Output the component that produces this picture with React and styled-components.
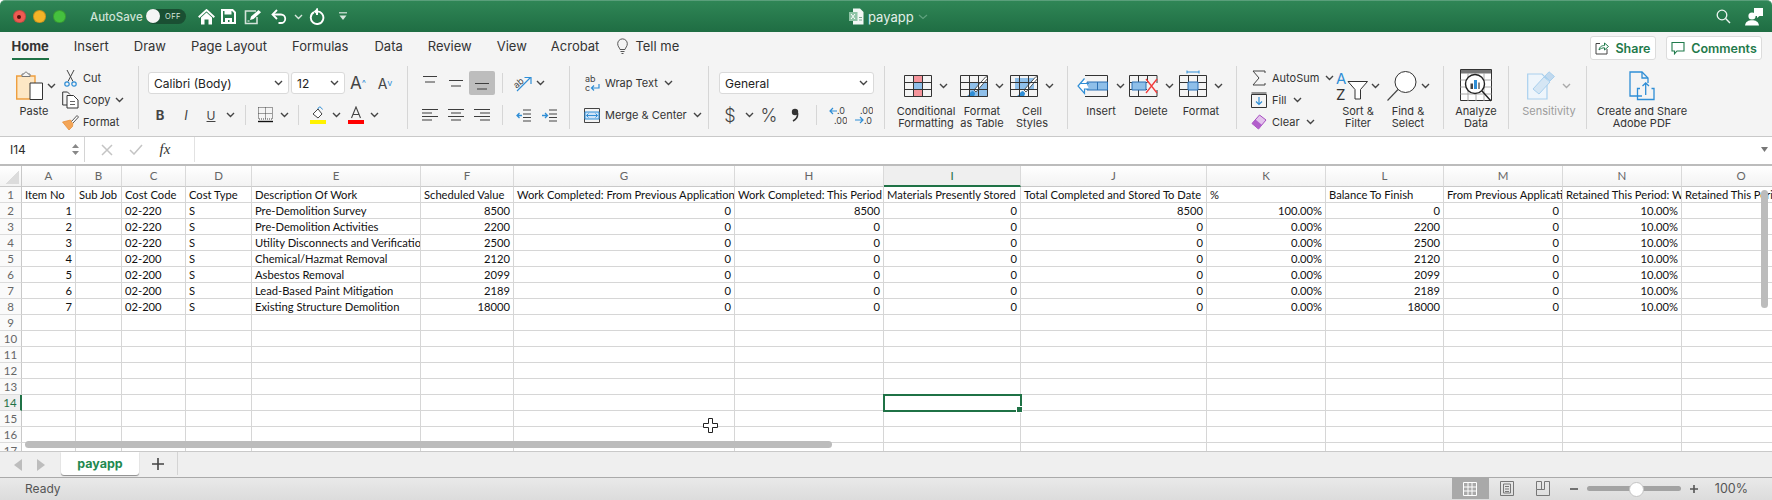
import styled, { createGlobalStyle } from 'styled-components'

const UI = `Inter, "Liberation Sans", sans-serif`
const CELL = `Lato, "Open Sans", sans-serif`
const DARK = '#3d3d3d'
const BLUE = '#2f8ed6'
const PALE = '#8fbfe9'

const GlobalStyle = createGlobalStyle`
  html, body { margin: 0; padding: 0; background: #fff; }
  #root { width: 1772px; height: 500px; overflow: hidden; }
  * { box-sizing: border-box; }
`

const Window = styled.div`
  width: 1772px;
  height: 500px;
  display: flex;
  flex-direction: column;
  overflow: hidden;
  font-family: ${UI};
  color: #2c2c2c;
`

/* title bar */
const TitleBar = styled.div`
  height: 32px;
  flex: none;
  display: flex;
  align-items: center;
  color: #fff;
  background: linear-gradient(#2f8656, #1f6d43);
  border-top: 1px solid #5a9f7b;
  border-radius: 5px 5px 0 0;
`
const Dots = styled.div`
  display: flex;
  gap: 7.5px;
  margin-left: 13px;
  width: 77px;
`
const Dot = styled.span`
  width: 12.5px;
  height: 12.5px;
  border-radius: 50%;
  background: ${(p) => p.$c};
  border: 1px solid rgba(0, 0, 0, 0.18);
  display: flex;
  align-items: center;
  justify-content: center;
  &::after {
    content: '';
    width: 4px;
    height: 4px;
    border-radius: 50%;
    background: ${(p) => (p.$mark ? '#5b0f0c' : 'transparent')};
  }
`
const AutoSave = styled.span`
  font-size: 11.5px;
  font-weight: 500;
  width: 56px;
  color: #cfe3d7;
`
const Toggle = styled.span`
  width: 40px;
  height: 15px;
  border-radius: 8px;
  background: #1a4f33;
  display: flex;
  align-items: center;
  justify-content: flex-end;
  padding-right: 5px;
  font-size: 7.5px;
  letter-spacing: 0.5px;
  color: #d6e6dc;
  margin-right: 11px;
  position: relative;
  &::before {
    content: '';
    position: absolute;
    left: 0;
    top: 0;
    width: 14px;
    height: 14px;
    border-radius: 50%;
    background: #f5f5f5;
  }
`
const TitleTool = styled.span`
  width: ${(p) => p.$w}px;
  flex: none;
  display: flex;
  justify-content: center;
  align-items: center;
`
const DocName = styled.div`
  position: absolute;
  left: 849px;
  top: 8px;
  display: flex;
  align-items: center;
  gap: 4px;
  font-size: 13px;
  color: #e3efe8;
`
const TitleRight = styled.div`
  margin-left: auto;
  margin-right: 9px;
  display: flex;
  align-items: center;
  gap: 14px;
`

/* tab row */
const Ribbon = styled.div`
  flex: none;
  height: 105px;
  background: #f4f4f4;
  border-bottom: 1px solid #c9c9c9;
`
const TabRow = styled.div`
  height: 34px;
  display: flex;
  align-items: flex-start;
  padding-left: 11.5px;
`
const Tab = styled.div`
  margin-right: ${(p) => p.$gap}px;
  height: 28px;
  line-height: 29px;
  font-size: 13px;
  font-weight: ${(p) => (p.$active ? 700 : 400)};
  color: #333;
  border-bottom: ${(p) => (p.$active ? '2.5px solid #1f7246' : 'none')};
  white-space: nowrap;
`
const TellMe = styled(Tab)`
  display: flex;
  align-items: center;
  gap: 7px;
  margin-left: 18px;
`
const ShareArea = styled.div`
  margin-left: auto;
  margin-right: 10px;
  margin-top: 4px;
  display: flex;
  gap: 10px;
`
const PillButton = styled.div`
  width: ${(p) => p.$w}px;
  height: 24px;
  background: #fff;
  border: 1px solid #dcdcdc;
  border-radius: 3px;
  display: flex;
  align-items: center;
  justify-content: center;
  gap: 6px;
  font-size: 12.5px;
  font-weight: 600;
  color: #1f7a4b;
`

/* ribbon body */
const RibbonBody = styled.div`
  height: 70px;
  display: flex;
  align-items: flex-start;
`
const Group = styled.div`
  width: ${(p) => p.$w}px;
  height: 63px;
  flex: none;
  display: flex;
  padding-left: ${(p) => p.$pad || 0}px;
  border-right: ${(p) => (p.$last ? 'none' : '1px solid #d6d6d6')};
`
const TwoRows = styled.div`
  display: flex;
  flex-direction: column;
  gap: 10px;
  padding-top: 6px;
`
const ThreeRows = styled.div`
  display: flex;
  flex-direction: column;
  width: ${(p) => p.$w}px;
  flex: none;
  padding-top: 1px;
`
const ToolRow = styled.div`
  height: 22px;
  display: flex;
  align-items: center;
`
const Tool = styled.span`
  width: ${(p) => p.$w}px;
  height: ${(p) => (p.$active ? 24 : 22)}px;
  flex: none;
  display: flex;
  align-items: center;
  justify-content: center;
  background: ${(p) => (p.$active ? '#bdbdbd' : 'transparent')};
  border-radius: 2px;
  font-size: ${(p) => p.$size || 13}px;
  font-weight: ${(p) => p.$weight || 400};
  font-style: ${(p) => (p.$italic ? 'italic' : 'normal')};
  color: #444;
`
const MiniSep = styled.span`
  width: 1px;
  height: 20px;
  flex: none;
  background: #d6d6d6;
  margin: 0 ${(p) => p.$m || 7}px;
`
const SmallLabel = styled.span`
  font-size: 11px;
  color: #333;
  margin-left: ${(p) => p.$left || 5}px;
  margin-right: ${(p) => p.$right || 5}px;
  white-space: nowrap;
`
const Caret = styled.sup`
  font-size: 9px;
  color: ${BLUE};
  line-height: 0;
`
const SelectBox = styled.div`
  width: ${(p) => p.$w}px;
  height: 22px;
  flex: none;
  background: #fff;
  border: 1px solid #dadada;
  border-radius: 3px;
  margin-right: ${(p) => p.$mr || 0}px;
  padding: 0 5px;
  display: flex;
  align-items: center;
  justify-content: space-between;
  font-size: 12px;
  color: #222;
`
const BigItem = styled.div`
  width: ${(p) => p.$w}px;
  flex: none;
  display: flex;
  flex-direction: column;
  align-items: center;
`
const BigIcon = styled.div`
  height: 39px;
  display: flex;
  align-items: center;
  gap: ${(p) => p.$gap ?? 7}px;
  padding-left: ${(p) => p.$shift || 0}px;
`
const BigLabel = styled.div`
  font-size: 11px;
  line-height: 12px;
  text-align: center;
  white-space: pre-line;
  color: ${(p) => (p.$muted ? '#9c9c9c' : '#333')};
`

/* formula bar */
const FormulaBar = styled.div`
  flex: none;
  height: 29px;
  display: flex;
  align-items: center;
  border-bottom: 2px solid #bcbcbc;
  background: #fff;
  padding-bottom: 2px;
`
const NameBox = styled.div`
  width: 85px;
  height: 100%;
  flex: none;
  display: flex;
  align-items: center;
  justify-content: space-between;
  padding: 0 5px 0 10px;
  font-size: 12px;
  border-right: 1px solid #d4d4d4;
`
const Stepper = styled.div`
  display: flex;
  flex-direction: column;
  gap: 3px;
`
const FormulaTool = styled.span`
  width: ${(p) => p.$w}px;
  flex: none;
  display: flex;
  justify-content: center;
`
const Fx = styled.span`
  font-family: "Liberation Serif", serif;
  font-style: italic;
  font-size: 15px;
  color: #333;
`
const FormulaRest = styled.div`
  flex: 1;
  height: 100%;
  margin-left: 7px;
  border-left: 1px solid #e2e2e2;
  display: flex;
  align-items: center;
  justify-content: flex-end;
  padding-right: 4px;
`

/* sheet */
const Sheet = styled.div`
  flex: none;
  height: 285px;
  position: relative;
  overflow: hidden;
  background: #fff;
  font-family: ${CELL};
`
const Row = styled.div`
  display: flex;
  width: 1801px;
  height: 16px;
`
const HeadRow = styled(Row)`
  height: 21px;
`
const Corner = styled.div`
  width: 22px;
  flex: none;
  background: linear-gradient(#fff, #f3f3f3);
  border-right: 1px solid #c9c9c9;
  border-bottom: 1px solid #c9c9c9;
  display: flex;
  justify-content: flex-end;
  align-items: flex-end;
  padding: 0 2px 2px 0;
  &::after {
    content: '';
    width: 13px;
    height: 13px;
    background: linear-gradient(135deg, transparent 50%, #dcdcdc 50%);
  }
`
const ColHead = styled.div`
  width: ${(p) => p.$w}px;
  flex: none;
  text-align: center;
  font-size: 11.5px;
  line-height: 20px;
  color: ${(p) => (p.$active ? '#1f7246' : '#666')};
  background: ${(p) => (p.$active ? '#efefef' : 'linear-gradient(#fff, #f3f3f3)')};
  border-right: 1px solid #dadada;
  border-bottom: ${(p) => (p.$active ? '2px solid #1f7246' : '1px solid #c9c9c9')};
`
const RowHead = styled.div`
  width: 22px;
  flex: none;
  text-align: center;
  font-size: 11.5px;
  line-height: 15px;
  color: ${(p) => (p.$active ? '#1f7246' : '#666')};
  background: ${(p) => (p.$active ? '#efefef' : '#fafafa')};
  border-right: ${(p) => (p.$active ? '2px solid #1f7246' : '1px solid #c9c9c9')};
  border-bottom: 1px solid #dcdcdc;
`
const Cell = styled.div`
  width: ${(p) => p.$w}px;
  flex: none;
  position: relative;
  overflow: ${(p) => (p.$selected ? 'visible' : 'hidden')};
  white-space: nowrap;
  padding: 0 3px;
  font-size: 11.2px;
  line-height: 16px;
  text-align: ${(p) => (p.$right ? 'right' : 'left')};
  color: #111;
  border-right: 1px solid #d6d6d6;
  border-bottom: 1px solid #d6d6d6;
  ${(p) =>
    p.$selected &&
    `
    z-index: 2;
    outline: 2px solid #1f7246;
    outline-offset: -1px;
    &::after {
      content: '';
      position: absolute;
      right: -3px;
      bottom: -3px;
      width: 5px;
      height: 5px;
      background: #1f7246;
      border: 1px solid #fff;
    }
  `}
`
const ScrollThumb = styled.div`
  position: absolute;
  background: #bcbcbc;
  border-radius: 4px;
  left: ${(p) => p.$x}px;
  top: ${(p) => p.$y}px;
  width: ${(p) => p.$w}px;
  height: ${(p) => p.$h}px;
  z-index: 3;
`
const CursorMark = styled.svg`
  position: absolute;
  left: 703px;
  top: 252px;
  z-index: 4;
`

/* sheet tabs and status bar */
const TabStrip = styled.div`
  flex: none;
  height: 26px;
  display: flex;
  background: #efefef;
  border-top: 1px solid #c9c9c9;
`
const NavArrows = styled.div`
  width: 61px;
  flex: none;
  display: flex;
  align-items: center;
  gap: 15px;
  padding-left: 14px;
`
const SheetTab = styled.div`
  width: 78px;
  height: 23px;
  background: #fff;
  border-radius: 0 0 3px 3px;
  box-shadow: 0 1px 1px #8a8a8a;
  text-align: center;
  line-height: 23px;
  font-size: 12.5px;
  font-weight: 700;
  color: #1f8a50;
`
const AddSheet = styled.div`
  width: 39px;
  border-right: 1px solid #d4d4d4;
  height: 23px;
  display: flex;
  align-items: center;
  justify-content: center;
`
const StatusBar = styled.div`
  flex: 1;
  display: flex;
  align-items: center;
  padding-left: 25px;
  padding-bottom: 1px;
  border-top: 1px solid #aaa;
  background: linear-gradient(#e9e9e9, #dcdcdc);
  font-size: 12px;
  color: #555;
`
const ViewButtons = styled.div`
  margin-left: auto;
  height: 100%;
  display: flex;
  align-items: center;
`
const ViewButton = styled.div`
  width: ${(p) => p.$w}px;
  height: 100%;
  display: flex;
  align-items: center;
  justify-content: center;
  background: ${(p) => (p.$active ? '#a9a9a9' : 'transparent')};
`
const Zoom = styled.div`
  display: flex;
  align-items: center;
  margin-left: 9px;
  margin-right: 24px;
`
const Slider = styled.div`
  width: 94px;
  height: 5px;
  border-radius: 3px;
  background: #a3a3a3;
  margin: 0 9px;
  position: relative;
  &::after {
    content: '';
    position: absolute;
    left: 42px;
    top: -4px;
    width: 13px;
    height: 13px;
    border-radius: 50%;
    background: #fff;
    border: 1px solid #c4c4c4;
  }
`
const ZoomValue = styled.span`
  margin-left: 17px;
  font-size: 12.5px;
  color: #555;
`

/* small drawings */
const Icon = ({ w, h, children, ...rest }) => (
  <svg width={w} height={h} viewBox={`0 0 ${w} ${h}`} fill="none" style={{ flex: 'none', display: 'block' }} {...rest}>
    {children}
  </svg>
)
const Chevron = ({ color = '#444' }) => (
  <Icon w={9} h={6}>
    <path d="M1 1l3.5 3.5L8 1" stroke={color} strokeWidth="1.4" />
  </Icon>
)
const Lines = ({ rows, y = 2 }) => (
  <Icon w={16} h={16}>
    {rows.map(([x1, x2], i) => (
      <path key={i} d={`M${x1} ${y + i * 5.5 + 0.5}H${x2}`} stroke={DARK} strokeWidth="1" />
    ))}
  </Icon>
)
const AlignGlyph = ({ pad }) => (
  <Icon w={16} h={14}>
    <path d={`M0 1.5H16M${pad[0]} 5H${pad[1]}M0 8.5H16M${pad[0]} 12H${pad[1]}`} stroke={DARK} />
  </Icon>
)
const TableGrid = ({ w = 28, h = 22, children }) => (
  <Icon w={w} h={h}>
    {children}
    <path
      d={`M.5.5H${w - 0.5}V${h - 0.5}H.5ZM.5 7.5H${w - 0.5}M.5 14.5H${w - 0.5}M9.5.5V${h - 0.5}M18.5.5V${h - 0.5}`}
      stroke="#333"
    />
  </Icon>
)
const Brush = () => (
  <g>
    <path d="M12 22c-3 0-5-1-5-1 3-1 3-5 6-5l2 2c0 2-1 4-3 4Z" fill={BLUE} />
    <path d="M14 15L26 1.5l2 1.5L16 17Z" fill="#fff" stroke="#444" strokeWidth=".9" />
  </g>
)

const CELL_WIDTHS = [54, 46, 64, 66, 169, 93, 221, 149, 137, 186, 119, 118, 119, 119, 119]
const COLUMNS = 'ABCDEFGHIJKLMNO'.split('')
const HEADERS = [
  'Item No', 'Sub Job', 'Cost Code', 'Cost Type', 'Description Of Work', 'Scheduled Value',
  'Work Completed: From Previous Application', 'Work Completed: This Period', 'Materials Presently Stored',
  'Total Completed and Stored To Date', '%', 'Balance To Finish', 'From Previous Application',
  'Retained This Period: Work', 'Retained This Period',
]
const ITEMS = [
  ['02-220', 'Pre-Demolition Survey', 8500, 8500, 8500, '100.00%', 0],
  ['02-220', 'Pre-Demolition Activities', 2200, 0, 0, '0.00%', 2200],
  ['02-220', 'Utility Disconnects and Verification', 2500, 0, 0, '0.00%', 2500],
  ['02-200', 'Chemical/Hazmat Removal', 2120, 0, 0, '0.00%', 2120],
  ['02-200', 'Asbestos Removal', 2099, 0, 0, '0.00%', 2099],
  ['02-200', 'Lead-Based Paint Mitigation', 2189, 0, 0, '0.00%', 2189],
  ['02-200', 'Existing Structure Demolition', 18000, 0, 0, '0.00%', 18000],
]

const rowCells = (n) => {
  const item = ITEMS[n - 2]
  if (n === 1) return HEADERS.map((text) => ({ text }))
  if (!item) return HEADERS.map(() => ({ text: '' }))
  const [code, desc, value, thisPeriod, total, pct, balance] = item
  return [
    { text: n - 1, right: true }, { text: '' }, { text: code }, { text: 'S' }, { text: desc },
    { text: value, right: true }, { text: 0, right: true }, { text: thisPeriod, right: true },
    { text: 0, right: true }, { text: total, right: true }, { text: pct, right: true },
    { text: balance, right: true }, { text: 0, right: true }, { text: '10.00%', right: true }, { text: '' },
  ]
}

const TABS = [
  ['Insert', 25], ['Draw', 25], ['Page Layout', 25], ['Formulas', 26], ['Data', 25], ['Review', 25], ['View', 24], ['Acrobat', 0],
]

export default function App() {
  return (
    <Window>
      <GlobalStyle />
      <TitleBar>
        <Dots>
          <Dot $c="#ee5b52" $mark />
          <Dot $c="#f5b427" />
          <Dot $c="#45c13e" />
        </Dots>
        <AutoSave>AutoSave</AutoSave>
        <Toggle>OFF</Toggle>
        <TitleTool $w={18}>
          <Icon w={17} h={16}>
            <path d="M.7 8.2L8.5 1l7.8 7.2" stroke="#fff" strokeWidth="1.9" />
            <path d="M3 8.5L8.5 3.6 14 8.5V15.5H10.5V10.5H6.5V15.5H3Z" fill="#fff" />
          </Icon>
        </TitleTool>
        <TitleTool $w={27}>
          <Icon w={15} h={15}>
            <path d="M1 1H11.5L14 3.5V14H1Z" stroke="#fff" strokeWidth="2" />
            <path d="M3.5 1.5H10.5V5.5H3.5ZM4 9H11V14H8.5V11H7V14H4Z" fill="#fff" />
          </Icon>
        </TitleTool>
        <TitleTool $w={22}>
          <Icon w={18} h={16}>
            <path d="M12 2H1.5V14.5H13V8" stroke="#d3e3d9" strokeWidth="1.6" />
            <path d="M6 11l1-3.5L14.5 1 17 3.2 9.5 10Z" fill="#fff" />
            <path d="M3.5 12h2" stroke="#fff" />
          </Icon>
        </TitleTool>
        <TitleTool $w={30}>
          <Icon w={16} h={15}>
            <path d="M6 1L1.5 5.5 6 10" stroke="#fff" strokeWidth="1.8" />
            <path d="M2 5.5H10A4.2 4.2 0 0 1 10 14H7.5" stroke="#fff" strokeWidth="1.8" />
          </Icon>
        </TitleTool>
        <TitleTool $w={8}>
          <Chevron color="#d8e7de" />
        </TitleTool>
        <TitleTool $w={30}>
          <Icon w={16} h={17}>
            <path d="M5 4.2A6.3 6.3 0 1 0 8 3.4" stroke="#fff" strokeWidth="1.9" />
            <path d="M8 .5V7" stroke="#fff" strokeWidth="1.9" />
            <path d="M8.8 0V7L4.6 3.4Z" fill="#fff" />
          </Icon>
        </TitleTool>
        <TitleTool $w={22}>
          <Icon w={8} h={9}>
            <path d="M0 .8H8" stroke="#d8e7de" strokeWidth="1.2" />
            <path d="M.5 3.5H7.5L4 8Z" fill="#d8e7de" />
          </Icon>
        </TitleTool>
        <DocName>
          <Icon w={15} h={17}>
            <path d="M4 .5H11L14.5 4V16.5H4Z" fill="#f2f7f4" />
            <path d="M0 4H8.5V13H0Z" fill="#8fc4a6" />
            <path d="M2 6l4 5M6 6l-4 5" stroke="#fff" />
            <path d="M10 9.5h3M10 12h3" stroke="#7aa98e" />
          </Icon>
          payapp
          <Icon w={10} h={6}>
            <path d="M1 1l4 3.5L9 1" stroke="#5fa27e" strokeWidth="1.2" />
          </Icon>
        </DocName>
        <TitleRight>
          <Icon w={15} h={15}>
            <circle cx="6" cy="6" r="4.8" stroke="#eef5f1" strokeWidth="1.3" />
            <path d="M9.6 9.6L14 14" stroke="#eef5f1" strokeWidth="1.4" />
          </Icon>
          <Icon w={18} h={19}>
            <path d="M9 1H18V9H14.5L12 11V9H9Z" fill="#fff" />
            <circle cx="7" cy="9" r="3.6" fill="#fff" />
            <path d="M0 18.5C.5 14.5 3.5 13.2 7 13.2S13.5 14.5 14 18.5Z" fill="#fff" />
          </Icon>
        </TitleRight>
      </TitleBar>

      <Ribbon>
        <TabRow>
          <Tab $active $gap={25}>Home</Tab>
          {TABS.map(([name, gap]) => (
            <Tab key={name} $gap={gap}>{name}</Tab>
          ))}
          <TellMe $gap={0}>
            <Icon w={11} h={17}>
              <path d="M3 11.5C2.5 9.5.7 8.5.7 5.7A4.8 4.8 0 0 1 10.3 5.7C10.3 8.5 8.5 9.5 8 11.5ZM3.5 13.5H7.5M4.500 15.5H6.5" stroke="#555" />
            </Icon>
            Tell me
          </TellMe>
          <ShareArea>
            <PillButton $w={66}>
              <Icon w={14} h={14}>
                <path d="M5 2.5H1V13H12V8" stroke="#444" />
                <path d="M4 9C4.5 5.5 7 4.5 9.5 4.5V2L13.5 5.5 9.5 9V6.8C7.5 6.8 5.5 7.5 4 9Z" stroke="#1f7a4b" />
              </Icon>
              Share
            </PillButton>
            <PillButton $w={96}>
              <Icon w={14} h={14}>
                <path d="M1 1.5H13V10H6L3.5 12.8V10H1Z" stroke="#1f7a4b" strokeWidth="1.1" />
              </Icon>
              Comments
            </PillButton>
          </ShareArea>
        </TabRow>

        <RibbonBody>
          <Group $w={139} $pad={10}>
            <BigItem $w={48}>
              <BigIcon $shift={4} $gap={4}>
                <Icon w={27} h={29}>
                  <path d="M.7 5H19V28H.7Z" fill="#fde7c4" stroke="#ee9f3f" strokeWidth="1.4" />
                  <path d="M6 5.5V3H8C8.5 .5 11.5 .5 12 3H14V5.5Z" fill="#f4f4f4" stroke="#777" />
                  <path d="M14 12H26.5V28.5H14Z" fill="#fff" stroke="#333" />
                </Icon>
                <Chevron />
              </BigIcon>
              <BigLabel>Paste</BigLabel>
            </BigItem>
            <ThreeRows $w={78}>
              <ToolRow>
                <Tool $w={24}>
                  <Icon w={13} h={18}>
                    <path d="M3 1L9 12.5M10 1L4 12.5" stroke="#444" />
                    <circle cx="3" cy="15" r="2.2" stroke={BLUE} strokeWidth="1.2" />
                    <circle cx="10" cy="15" r="2.2" stroke={BLUE} strokeWidth="1.2" />
                  </Icon>
                </Tool>
                <SmallLabel $left={1}>Cut</SmallLabel>
              </ToolRow>
              <ToolRow>
                <Tool $w={24}>
                  <Icon w={17} h={18}>
                    <path d="M5 14H.7V1H5.5L8 3.5" stroke="#333" />
                    <path d="M5 4.5H11.5L16 9V17H5Z" fill="#fff" stroke="#333" />
                    <path d="M8 10.5H13M8 13.5H13" stroke="#666" />
                  </Icon>
                </Tool>
                <SmallLabel $left={1}>Copy</SmallLabel>
                <Chevron />
              </ToolRow>
              <ToolRow>
                <Tool $w={24}>
                  <Icon w={17} h={17}>
                    <path d="M.5 8L7 16 10.5 12.5 11 8.5 8.5 6Z" fill="#f3a557" stroke="#e68a2e" strokeWidth=".7" />
                    <path d="M9.5 7.5L15 1.5 16.5 3 11 9" fill="#fff" stroke="#555" />
                  </Icon>
                </Tool>
                <SmallLabel $left={1}>Format</SmallLabel>
              </ToolRow>
            </ThreeRows>
          </Group>

          <Group $w={269} $pad={9}>
            <TwoRows>
              <ToolRow>
                <SelectBox $w={141} $mr={2}>
                  Calibri (Body)
                  <Chevron />
                </SelectBox>
                <SelectBox $w={54}>
                  12
                  <Chevron />
                </SelectBox>
                <Tool $w={26} $size={17}>
                  A<Caret>^</Caret>
                </Tool>
                <Tool $w={28} $size={14}>
                  A<Caret>v</Caret>
                </Tool>
              </ToolRow>
              <ToolRow>
                <Tool $w={24} $weight={700} $size={13}>B</Tool>
                <Tool $w={28} $italic $size={13}>I</Tool>
                <Tool $w={22} $size={12}><u>U</u></Tool>
                <Tool $w={16}><Chevron /></Tool>
                <MiniSep $m={7} />
                <Tool $w={24}>
                  <Icon w={15} h={16}>
                    <path d="M.5.5H14.5V12H.5ZM7.5.5V12M.5 6.5H14.5" stroke="#444" strokeDasharray="1 1" />
                    <path d="M0 14.5H15" stroke="#111" strokeWidth="1.4" />
                  </Icon>
                </Tool>
                <Tool $w={14}><Chevron /></Tool>
                <MiniSep $m={7} />
                <Tool $w={24}>
                  <Icon w={16} h={18}>
                    <path d="M3 8L8 3 12 8 8 12Z" stroke="#444" fill="#fff" />
                    <path d="M8 3C8 1 10 .5 11 1.5L12.5 3.5" stroke={BLUE} />
                    <path d="M0 14H16V18H0Z" fill="#fff200" />
                  </Icon>
                </Tool>
                <Tool $w={12}><Chevron /></Tool>
                <Tool $w={28}>
                  <Icon w={16} h={18}>
                    <path d="M3.5 12L8 1 12.5 12M5 8.5H11" stroke="#444" strokeWidth="1.1" />
                    <path d="M0 14H16V18H0Z" fill="#f00" />
                  </Icon>
                </Tool>
                <Tool $w={8}><Chevron /></Tool>
              </ToolRow>
            </TwoRows>
          </Group>

          <Group $w={162} $pad={9}>
            <TwoRows>
              <ToolRow>
                <Tool $w={26}><Lines rows={[[1, 15], [3, 13]]} y={1} /></Tool>
                <Tool $w={26}><Lines rows={[[1, 15], [3, 13]]} y={5} /></Tool>
                <Tool $w={26} $active><Lines rows={[[1, 15], [3, 13]]} y={8} /></Tool>
                <MiniSep $m={7} />
                <Tool $w={26}>
                  <Icon w={20} h={17}>
                    <text x="1" y="11" transform="rotate(-40 6 9)" fontFamily="Inter" fontSize="9" fill="#444">ab</text>
                    <path d="M4 16L17 3M11.5 2.5H18V9" stroke={BLUE} strokeWidth="1.2" />
                  </Icon>
                </Tool>
                <Chevron />
              </ToolRow>
              <ToolRow>
                <Tool $w={26}><AlignGlyph pad={[0, 10]} /></Tool>
                <Tool $w={26}><AlignGlyph pad={[3, 13]} /></Tool>
                <Tool $w={26}><AlignGlyph pad={[6, 16]} /></Tool>
                <MiniSep $m={7} />
                <Tool $w={26}>
                  <Icon w={15} h={13}>
                    <path d="M7 1H15M7 5H15M7 8.5H15M7 12H15" stroke="#444" />
                    <path d="M6 6.5H1M3.5 4L1 6.5 3.5 9" stroke={BLUE} strokeWidth="1.3" />
                  </Icon>
                </Tool>
                <Tool $w={26}>
                  <Icon w={15} h={13}>
                    <path d="M7 1H15M7 5H15M7 8.5H15M7 12H15" stroke="#444" />
                    <path d="M0 6.5H5M3 4L5.5 6.5 3 9" stroke={BLUE} strokeWidth="1.3" />
                  </Icon>
                </Tool>
              </ToolRow>
            </TwoRows>
          </Group>

          <Group $w={139} $pad={14}>
            <TwoRows>
              <ToolRow>
                <Icon w={16} h={18}>
                  <text x="1" y="8" fontFamily="Inter" fontSize="9" fill="#444">ab</text>
                  <text x="1" y="17" fontFamily="Inter" fontSize="9" fill="#444">c</text>
                  <path d="M15 10V14H8M10 11.5L7.5 14 10 16.5" stroke={BLUE} strokeWidth="1.2" />
                </Icon>
                <SmallLabel $left={5} $right={6}>Wrap Text</SmallLabel>
                <Chevron />
              </ToolRow>
              <ToolRow>
                <Icon w={16} h={15}>
                  <path d="M.5.5H15.5V14.5H.5Z" stroke="#444" />
                  <path d="M1 4H15V11H1Z" fill="#cfe3f6" stroke={BLUE} />
                  <path d="M2.5 7.5H13.5M4.5 5.5L2.5 7.5 4.5 9.5M11.5 5.5L13.5 7.5 11.5 9.5" stroke={BLUE} />
                </Icon>
                <SmallLabel $left={5} $right={6}>Merge &amp; Center</SmallLabel>
                <Chevron />
              </ToolRow>
            </TwoRows>
          </Group>

          <Group $w={176} $pad={10}>
            <TwoRows>
              <SelectBox $w={155}>
                General
                <Chevron />
              </SelectBox>
              <ToolRow>
                <Tool $w={22} $size={18} $weight={300}>$</Tool>
                <Tool $w={16}><Chevron /></Tool>
                <Tool $w={24} $size={18} $weight={300}>%</Tool>
                <Tool $w={27}>
                  <Icon w={8} h={14}>
                    <circle cx="4" cy="4" r="3.2" fill="#333" />
                    <path d="M6.5 5C7 8.5 5 11.5 2 13" stroke="#333" strokeWidth="1.6" />
                  </Icon>
                </Tool>
                <MiniSep $m={8} />
                <Tool $w={26}>
                  <Icon w={18} h={19}>
                    <text x="8" y="8" fontFamily="Inter" fontSize="9" fill="#444">.0</text>
                    <text x="5" y="18" fontFamily="Inter" fontSize="9" fill="#444">.00</text>
                    <path d="M8 5H1M4 2L1 5 4 8" stroke={BLUE} strokeWidth="1.2" />
                  </Icon>
                </Tool>
                <Tool $w={26}>
                  <Icon w={18} h={19}>
                    <text x="5" y="8" fontFamily="Inter" fontSize="9" fill="#444">.00</text>
                    <text x="9" y="18" fontFamily="Inter" fontSize="9" fill="#444">.0</text>
                    <path d="M0 14H8M5 11L8 14 5 17" stroke={BLUE} strokeWidth="1.2" />
                  </Icon>
                </Tool>
              </ToolRow>
            </TwoRows>
          </Group>

          <Group $w={183} $pad={10}>
            <BigItem $w={62}>
              <BigIcon>
                <TableGrid>
                  <path d="M9 0H19V7H9ZM9 14H19V22H9Z" fill="#f5949b" />
                  <path d="M9 7H19V14H9Z" fill={PALE} />
                  <path d="M9.5.5H18.5V7.5H9.5V14.5H18.5V21.5H9.5" stroke="#e2323c" />
                </TableGrid>
                <Chevron />
              </BigIcon>
              <BigLabel>{'Conditional\nFormatting'}</BigLabel>
            </BigItem>
            <BigItem $w={50}>
              <BigIcon>
                <TableGrid>
                  <path d="M9 7H28V22H9Z" fill={PALE} />
                  <Brush />
                </TableGrid>
                <Chevron />
              </BigIcon>
              <BigLabel>{'Format\nas Table'}</BigLabel>
            </BigItem>
            <BigItem $w={50}>
              <BigIcon>
                <TableGrid>
                  <path d="M5 3H24V15H5Z" fill={PALE} />
                  <Brush />
                </TableGrid>
                <Chevron />
              </BigIcon>
              <BigLabel>{'Cell\nStyles'}</BigLabel>
            </BigItem>
          </Group>

          <Group $w={169} $pad={8}>
            <BigItem $w={50}>
              <BigIcon>
                <Icon w={32} h={22}>
                  <path d="M8 .5H30.5V21.5H8" stroke="#333" />
                  <path d="M10 7H30.5V15H10Z" fill={PALE} stroke="#2a6fb3" />
                  <path d="M20.5 7V15" stroke="#2a6fb3" />
                  <path d="M12 8.5H3M7.5 3.5L1 11 7.5 18.5V14H12" fill="#fff" stroke={BLUE} strokeWidth="1.2" />
                </Icon>
                <Chevron />
              </BigIcon>
              <BigLabel>Insert</BigLabel>
            </BigItem>
            <BigItem $w={50}>
              <BigIcon>
                <Icon w={29} h={22}>
                  <path d="M28 8V.5H.5V21.5H28V15M.5 7.5H18M.5 14.5H18M9.5.5V21.5M18.5.5V7.5" stroke="#333" />
                  <path d="M3 7H17V15H3Z" fill={PALE} stroke="#2a6fb3" />
                  <path d="M17 4L28 18M28 4L17 18" stroke="#f23a3a" strokeWidth="1.3" />
                </Icon>
                <Chevron />
              </BigIcon>
              <BigLabel>Delete</BigLabel>
            </BigItem>
            <BigItem $w={50}>
              <BigIcon>
                <Icon w={28} h={27} style={{ marginTop: -4 }}>
                  <path d="M8 2H20M8 .5V3.5M20 .5V3.5" stroke={BLUE} />
                  <path d="M.5 5.5H27.5V26.5H.5ZM.5 12.5H27.5M.5 19.5H27.5M9.5 5.5V26.5M18.5 5.5V26.5" stroke="#333" />
                  <path d="M9 12H19V20H9Z" fill={PALE} stroke="#2a6fb3" />
                </Icon>
                <Chevron />
              </BigIcon>
              <BigLabel>Format</BigLabel>
            </BigItem>
          </Group>

          <Group $w={207} $pad={12}>
            <ThreeRows $w={84}>
              <ToolRow>
                <Tool $w={20}>
                  <Icon w={14} h={16}>
                    <path d="M13 3V1H1L7 8 1 15H13V13" stroke="#444" />
                  </Icon>
                </Tool>
                <SmallLabel $left={3} $right={6}>AutoSum</SmallLabel>
                <Chevron />
              </ToolRow>
              <ToolRow>
                <Tool $w={20}>
                  <Icon w={16} h={16}>
                    <path d="M.5 2.5H15.5V15.5H.5ZM.5 1H15.5" stroke="#333" />
                    <path d="M8 5V12M5 9.5L8 12.5 11 9.5" stroke={BLUE} strokeWidth="1.2" />
                  </Icon>
                </Tool>
                <SmallLabel $left={3} $right={6}>Fill</SmallLabel>
                <Chevron />
              </ToolRow>
              <ToolRow>
                <Tool $w={20}>
                  <Icon w={16} h={16}>
                    <path d="M8.5 1L15 6 7.5 15 1 9.5Z" fill="#e3c2ec" stroke="#a64dc0" />
                    <path d="M4.5 5.5L11 11 7.5 15 1 9.5Z" fill="#b25ecb" />
                  </Icon>
                </Tool>
                <SmallLabel $left={3} $right={6}>Clear</SmallLabel>
                <Chevron />
              </ToolRow>
            </ThreeRows>
            <BigItem $w={50}>
              <BigIcon $gap={3}>
                <Icon w={32} h={30}>
                  <text x="0" y="13" fontFamily="Inter" fontSize="15" fill={BLUE}>A</text>
                  <text x="0" y="29" fontFamily="Inter" fontSize="15" fill="#333">Z</text>
                  <path d="M12 10.5H31.500L24.500 18.5V28H19V18.5Z" fill="#fff" stroke="#333" />
                </Icon>
                <Chevron />
              </BigIcon>
              <BigLabel>{'Sort &\nFilter'}</BigLabel>
            </BigItem>
            <BigItem $w={50}>
              <BigIcon $gap={4}>
                <Icon w={30} h={30}>
                  <circle cx="18.5" cy="11" r="10.5" fill="#fff" stroke="#333" />
                  <path d="M11 18.5L.5 29.5" stroke="#444" strokeWidth="1.1" />
                </Icon>
                <Chevron />
              </BigIcon>
              <BigLabel>{'Find &\nSelect'}</BigLabel>
            </BigItem>
          </Group>

          <Group $w={65} $pad={7}>
            <BigItem $w={50}>
              <BigIcon>
                <Icon w={32} h={33}>
                  <path d="M.5.5H31.5V31.5H.5Z" fill="#fff" stroke="#333" />
                  <path d="M1 1H31V4.5H1Z" fill="#777" />
                  <path d="M.5 11H31.5M.5 18H31.5M.5 25H31.5M8 4V32M16 4V32M24 4V32" stroke="#aaa" />
                  <circle cx="15" cy="15" r="9.5" fill="#fff" stroke="#222" strokeWidth="1.4" />
                  <path d="M10.5 14.5H13V20H10.5Z" fill="#444" />
                  <path d="M14 11H17V20H14Z" fill={BLUE} />
                  <path d="M18 13.5H20V20H18Z" fill="#888" />
                  <path d="M22 22L31 32" stroke="#222" strokeWidth="1.4" />
                </Icon>
              </BigIcon>
              <BigLabel>{'Analyze\nData'}</BigLabel>
            </BigItem>
          </Group>

          <Group $w={78} $pad={10}>
            <BigItem $w={60}>
              <BigIcon>
                <Icon w={28} h={29}>
                  <path d="M.7 3H15L20 8V28H.7Z" fill="#eef5fb" stroke="#a9d0ee" strokeWidth="1.2" />
                  <path d="M6 18L17 6 23 11 12 23Z" fill="#d5e6f4" stroke="#a9d0ee" />
                  <path d="M18 5L22 .8 27.5 5.5 23 10Z" fill="#c1d9ee" stroke="#a9d0ee" />
                </Icon>
                <Chevron color="#aaa" />
              </BigIcon>
              <BigLabel $muted>Sensitivity</BigLabel>
            </BigItem>
          </Group>

          <Group $w={110} $last>
            <BigItem $w={110}>
              <BigIcon>
                <Icon w={26} h={30}>
                  <path d="M13 25H1V1H13L19 7V12" stroke={BLUE} strokeWidth="1.3" />
                  <path d="M13 1V7H19" stroke={BLUE} strokeWidth="1.3" />
                  <path d="M11 17.5H8.5V28.5H25V17.5H22.5" stroke={BLUE} strokeWidth="1.3" />
                  <path d="M16.7 24V12M13.5 15L16.7 12 20 15" stroke={BLUE} strokeWidth="1.3" />
                </Icon>
              </BigIcon>
              <BigLabel>{'Create and Share\nAdobe PDF'}</BigLabel>
            </BigItem>
          </Group>
        </RibbonBody>
      </Ribbon>

      <FormulaBar>
        <NameBox>
          I14
          <Stepper>
            <Icon w={7} h={4}><path d="M3.5 0L7 4H0Z" fill="#888" /></Icon>
            <Icon w={7} h={4}><path d="M3.5 4L7 0H0Z" fill="#888" /></Icon>
          </Stepper>
        </NameBox>
        <FormulaTool $w={44}>
          <Icon w={12} h={12}><path d="M1 1L11 11M11 1L1 11" stroke="#c4c4c4" strokeWidth="1.5" /></Icon>
        </FormulaTool>
        <FormulaTool $w={14}>
          <Icon w={14} h={11}><path d="M1 6L5 10 13 1" stroke="#c4c4c4" strokeWidth="1.5" /></Icon>
        </FormulaTool>
        <FormulaTool $w={44}><Fx>fx</Fx></FormulaTool>
        <FormulaRest>
          <Icon w={7} h={5}><path d="M0 0H7L3.5 5Z" fill="#777" /></Icon>
        </FormulaRest>
      </FormulaBar>

      <Sheet>
        <HeadRow>
          <Corner />
          {COLUMNS.map((c, i) => (
            <ColHead key={c} $w={CELL_WIDTHS[i]} $active={c === 'I'}>{c}</ColHead>
          ))}
        </HeadRow>
        {Array.from({ length: 17 }, (_, r) => r + 1).map((n) => (
          <Row key={n}>
            <RowHead $active={n === 14}>{n}</RowHead>
            {rowCells(n).map((cell, i) => (
              <Cell key={i} $w={CELL_WIDTHS[i]} $right={cell.right} $selected={n === 14 && i === 8}>
                {cell.text}
              </Cell>
            ))}
          </Row>
        ))}
        <ScrollThumb $x={25} $y={275} $w={807} $h={7} />
        <ScrollThumb $x={1761} $y={24} $w={7} $h={118} />
        <CursorMark width="15" height="15" viewBox="0 0 15 15">
          <path d="M5.5 .5H9.5V5.5H14.5V9.5H9.5V14.5H5.5V9.5H.5V5.5H5.5Z" fill="#fff" stroke="#222" />
        </CursorMark>
      </Sheet>

      <TabStrip>
        <NavArrows>
          <Icon w={8} h={12}><path d="M8 0V12L0 6Z" fill="#bdbdbd" /></Icon>
          <Icon w={8} h={12}><path d="M0 0V12L8 6Z" fill="#bdbdbd" /></Icon>
        </NavArrows>
        <SheetTab>payapp</SheetTab>
        <AddSheet>
          <Icon w={12} h={12}><path d="M6 0V12M0 6H12" stroke="#444" strokeWidth="1.6" /></Icon>
        </AddSheet>
      </TabStrip>

      <StatusBar>
        Ready
        <ViewButtons>
          <ViewButton $w={37} $active>
            <Icon w={14} h={14}>
              <path d="M.5.5H13.5V13.5H.5ZM.5 5H13.5M.5 9H13.5M5 .5V13.5M9 .5V13.5" stroke="#fff" />
            </Icon>
          </ViewButton>
          <ViewButton $w={36}>
            <Icon w={14} h={15}>
              <path d="M.5.5H13.5V14.5H.5Z" stroke="#777" />
              <path d="M3.5 3H10.5V12H3.5ZM5 5.5H9M5 8H9M5 10.5H9" stroke="#777" />
            </Icon>
          </ViewButton>
          <ViewButton $w={36}>
            <Icon w={14} h={15}>
              <path d="M.5 8.5V14.5H13.5V.5H8.5V8.5H.5V.5H5.5V8.5" stroke="#777" />
            </Icon>
          </ViewButton>
          <Zoom>
            <Icon w={8} h={8}><path d="M0 4H8" stroke="#555" strokeWidth="1.6" /></Icon>
            <Slider />
            <Icon w={8} h={8}><path d="M4 0V8M0 4H8" stroke="#555" strokeWidth="1.6" /></Icon>
            <ZoomValue>100%</ZoomValue>
          </Zoom>
        </ViewButtons>
      </StatusBar>
    </Window>
  )
}
